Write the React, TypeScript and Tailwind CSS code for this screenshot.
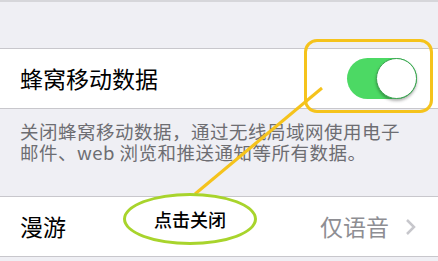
import React from "react";

const font = '"Noto Sans CJK SC", "Noto Sans", sans-serif';

export default function App() {
  return (
    <div
      className="relative w-[438px] h-[261px] overflow-hidden bg-[#efeff4]"
      style={{ fontFamily: font }}
    >
      <div className="h-[2px] bg-[#d6d6da]" />
      <div className="h-[46px]" />
      <div className="h-[61px] bg-white border-y border-[#c8c7cc] flex items-center pl-5 pr-[21px]">
        <span className="text-[23px] text-black leading-none">蜂窝移动数据</span>
        <div className="ml-auto w-[70px] h-[41px] rounded-full bg-[#4cd964] relative">
          <div className="absolute right-0 top-0 w-[41px] h-[41px] rounded-full bg-white border border-[#3aa350] shadow-[0_2px_3px_rgba(0,0,0,0.3)]" />
        </div>
      </div>
      <div className="px-5 pt-[12px] text-[18.5px] leading-[21px] text-[#6d6d72] tracking-[0.5px]">
        <div>关闭蜂窝移动数据，通过无线局域网使用电子</div>
        <div>邮件、web 浏览和推送通知等所有数据。</div>
      </div>
      <div className="h-[33px]" />
      <div className="h-[61px] bg-white border-y border-[#c8c7cc] flex items-center pl-5 pr-[22px]">
        <span className="text-[23px] text-black leading-none">漫游</span>
        <span className="ml-auto text-[23px] text-[#8e8e93] leading-none">仅语音</span>
        <svg className="ml-[16px]" width="11" height="18" viewBox="0 0 11 18">
          <path d="M2 2 L9 9 L2 16" fill="none" stroke="#c7c7cc" strokeWidth="2.5" />
        </svg>
      </div>

      {/* Overlays */}
      <div className="absolute left-[304px] top-[39px] w-[129px] h-[74px] rounded-[13px] border-[3px] border-[#f5c31c]" />
      <svg className="absolute left-0 top-0" width="438" height="261">
        <line x1="322" y1="88" x2="195" y2="194" stroke="#f5c31c" strokeWidth="3" />
      </svg>
      <div className="absolute left-[123px] top-[193px] w-[134px] h-[52px] rounded-[50%] border-[3px] border-[#a8d42c] bg-white flex items-center justify-center">
        <span className="text-[18px] text-black leading-none font-medium">点击关闭</span>
      </div>
    </div>
  );
}
